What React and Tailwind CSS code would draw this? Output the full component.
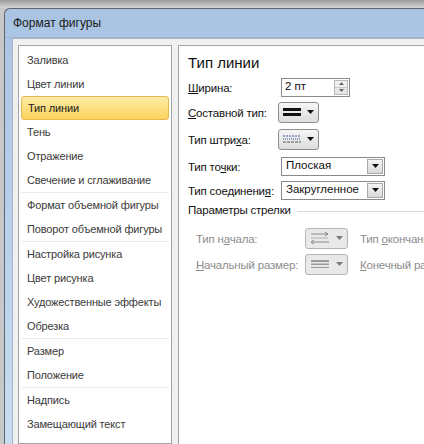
const font = { fontFamily: '"Liberation Sans", Arial, sans-serif' };

const groups = [
  ['Заливка', 'Цвет линии', 'Тип линии', 'Тень', 'Отражение', 'Свечение и сглаживание'],
  ['Формат объемной фигуры', 'Поворот объемной фигуры'],
  ['Настройка рисунка', 'Цвет рисунка', 'Художественные эффекты', 'Обрезка'],
  ['Размер', 'Положение'],
  ['Надпись', 'Замещающий текст'],
];

function Caret({ dim }) {
  return (
    <svg width="7" height="4" viewBox="0 0 7 4">
      <path d="M0 0h7L3.5 4z" fill={dim ? '#7a7a7a' : '#111'} />
    </svg>
  );
}

function IconButton({ children, dim }) {
  return (
    <div
      className={`flex h-[21px] shrink-0 items-center gap-[6px] rounded-[3px] border px-[4px] ${
        dim ? 'border-[#b5b5b5] bg-[#e9e9e9]' : 'border-[#8e8f8f] bg-gradient-to-b from-[#f6f6f6] to-[#dcdcdc]'
      }`}
    >
      {children}
      <Caret dim={dim} />
    </div>
  );
}

function Select({ value }) {
  return (
    <div className="flex h-[19px] w-[104px] shrink-0 items-center border border-[#8a8a8a] bg-white">
      <span className="grow whitespace-nowrap pl-[4px] text-[11.5px] text-[#111]">{value}</span>
      <div className="mr-[1px] flex h-[15px] w-[16px] items-center justify-center border border-[#a8a8a8] bg-gradient-to-b from-[#f4f4f4] to-[#d8d8d8]">
        <Caret />
      </div>
    </div>
  );
}

function Label({ children, dim }) {
  return (
    <span className={`whitespace-nowrap text-[11.5px] tracking-[-0.2px] ${dim ? 'text-[#8c8c8c]' : 'text-[#111]'}`}>
      {children}
    </span>
  );
}

export default function App() {
  return (
    <div className="flex h-[444px] w-[424px] flex-col overflow-hidden bg-[#c8c8c8]" style={font}>
      <div className="h-[8px] shrink-0 bg-gradient-to-b from-[#9a9a9a] to-[#d6d6d6]" />
      <div className="ml-[4px] flex grow flex-col rounded-tl-[6px] border-l border-t border-[#5b6675] bg-gradient-to-b from-[#a9c4e3] to-[#c9ddf2]">
        <div className="flex h-[29px] shrink-0 items-center border-b border-[#9fb3c9] pl-[8px] text-[12px] text-[#1a1a1a]">
          Формат фигуры
        </div>
        <div className="ml-[7px] flex min-w-0 grow gap-[6px] overflow-hidden border-l border-t border-[#a6b4c4] bg-[#f0f0f0] pl-[5px] pt-[6px]">
          <div className="w-[154px] shrink-0 border border-[#a3a3a3] bg-white px-[2px] pt-[2px]">
            {groups.map((g, gi) => (
              <div key={gi} className={gi > 0 ? 'border-t border-[#ececec]' : ''}>
                {g.map((t) => (
                  <div
                    key={t}
                    className={`flex h-[24px] items-center whitespace-nowrap pl-[6px] text-[11px] tracking-[-0.15px] ${
                      t === 'Тип линии'
                        ? 'rounded-[3px] border border-[#e4b850] bg-gradient-to-b from-[#fdeaa3] to-[#fbd45a] text-[#1a1a1a]'
                        : 'text-[#3a3a3a]'
                    }`}
                  >
                    {t}
                  </div>
                ))}
              </div>
            ))}
          </div>
          <div className="min-w-0 grow overflow-hidden border-l border-t border-[#a3a3a3] bg-white pl-[9px] pt-[7px]">
            <div className="text-[15px] leading-[20px] text-[#111]">Тип линии</div>
            <div className="mt-[3px] flex flex-col">
              <div className="flex h-[22px] items-center">
                <span className="w-[93px] shrink-0"><Label><u>Ш</u>ирина:</Label></span>
                <div className="flex h-[19px] w-[69px] shrink-0 items-center border border-[#8a8a8a] bg-white">
                  <span className="grow pl-[3px] text-[11.5px] text-[#111]">2 пт</span>
                  <div className="mr-[1px] flex h-[15px] w-[14px] flex-col border border-[#b8b8b8]">
                    <div className="flex grow items-center justify-center bg-[#f0f0f0]">
                      <svg width="5" height="3" viewBox="0 0 5 3"><path d="M0 3h5L2.5 0z" fill="#666" /></svg>
                    </div>
                    <div className="flex grow items-center justify-center border-t border-[#c8c8c8] bg-[#e6e6e6]">
                      <svg width="5" height="3" viewBox="0 0 5 3"><path d="M0 0h5L2.5 3z" fill="#666" /></svg>
                    </div>
                  </div>
                </div>
              </div>
              <div className="mt-[3px] flex h-[22px] items-center">
                <span className="w-[90px] shrink-0"><Label><u>С</u>оставной тип:</Label></span>
                <IconButton>
                  <svg width="18" height="10" viewBox="0 0 18 10">
                    <rect x="0" y="1" width="18" height="3" fill="#111" />
                    <rect x="0" y="6" width="18" height="3" fill="#111" />
                  </svg>
                </IconButton>
              </div>
              <div className="mt-[5px] flex h-[22px] items-center">
                <span className="w-[90px] shrink-0"><Label>Тип штри<u>х</u>а:</Label></span>
                <IconButton>
                  <svg width="18" height="10" viewBox="0 0 18 10">
                    <path d="M0 2h18" stroke="#3c5a9a" strokeWidth="1" strokeDasharray="2 1" />
                    <path d="M0 5h18" stroke="#3c5a9a" strokeWidth="1" strokeDasharray="1 1" />
                    <path d="M0 8h18" stroke="#555" strokeWidth="1" strokeDasharray="3 1" />
                  </svg>
                </IconButton>
              </div>
              <div className="mt-[5px] flex h-[22px] items-center">
                <span className="w-[93px] shrink-0"><Label>Тип то<u>ч</u>ки:</Label></span>
                <Select value="Плоская" />
              </div>
              <div className="mt-[2px] flex h-[22px] items-center">
                <span className="w-[93px] shrink-0"><Label>Тип соединени<u>я</u>:</Label></span>
                <Select value="Закругленное" />
              </div>
              <div className="mt-[1px] flex h-[18px] items-center gap-[6px]">
                <Label>Параметры стрелки</Label>
                <div className="h-px grow bg-[#dcdcdc]" />
              </div>
              <div className="ml-[8px] mt-[7px] flex h-[22px] items-center">
                <span className="w-[109px] shrink-0"><Label dim>Тип н<u>а</u>чала:</Label></span>
                <IconButton dim>
                  <svg width="20" height="14" viewBox="0 0 20 14">
                    <path d="M1 3h17M15 1l3 2-3 2" stroke="#8a8a8a" fill="none" />
                    <path d="M1 7h17" stroke="#b0b0b0" />
                    <path d="M2 11h17M4 9l-3 2 3 2" stroke="#8a8a8a" fill="none" />
                  </svg>
                </IconButton>
                <span className="ml-[12px]"><Label dim>Тип <u>о</u>кончани</Label></span>
              </div>
              <div className="ml-[8px] mt-[4px] flex h-[22px] items-center">
                <span className="w-[109px] shrink-0"><Label dim><u>Н</u>ачальный размер:</Label></span>
                <IconButton dim>
                  <svg width="20" height="10" viewBox="0 0 20 10">
                    <rect x="1" y="1" width="18" height="2" fill="#9a9a9a" />
                    <rect x="1" y="4.5" width="18" height="1.5" fill="#9a9a9a" />
                    <rect x="1" y="8" width="18" height="1" fill="#9a9a9a" />
                  </svg>
                </IconButton>
                <span className="ml-[12px]"><Label dim><u>К</u>онечный раз</Label></span>
              </div>
            </div>
          </div>
        </div>
      </div>
    </div>
  );
}
